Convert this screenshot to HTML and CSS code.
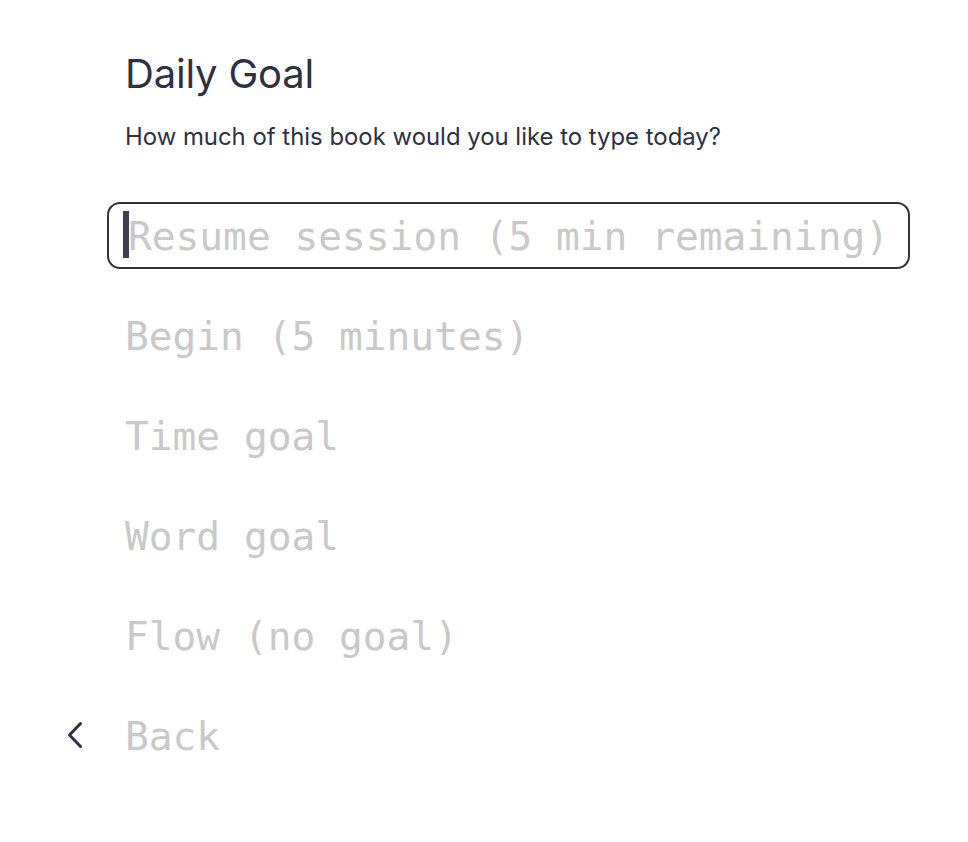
FILE: index.html
```html
<!DOCTYPE html>
<html lang="en">
<head>
<meta charset="utf-8">
<title>Daily Goal</title>
<link rel="stylesheet" href="styles.css">
</head>
<body>
<main class="page">
  <h1 class="title">Daily Goal</h1>
  <p class="subtitle">How much of this book would you like to type today?</p>
  <ul class="options">
    <li class="option active"><span class="cursor"></span>Resume session (5 min remaining)</li>
    <li class="option">Begin (5 minutes)</li>
    <li class="option">Time goal</li>
    <li class="option">Word goal</li>
    <li class="option">Flow (no goal)</li>
    <li class="option back">
      <svg class="chevron" width="20" height="30" viewBox="0 0 20 30" aria-hidden="true"><path d="M15.5 3.5 L4.5 15 L15.5 26.5" fill="none" stroke="#2d3142" stroke-width="3" stroke-linecap="round" stroke-linejoin="round"/></svg>
      Back
    </li>
  </ul>
</main>
</body>
</html>
```
FILE: styles.css
```css
html, body {
  margin: 0;
  padding: 0;
  background: #ffffff;
}
.page {
  padding: 48px 0 0 125px;
  font-family: Inter, "Noto Sans", sans-serif;
  color: #2d3142;
}
.title {
  margin: 0;
  font-size: 40px;
  line-height: 52px;
  font-weight: 400;
  letter-spacing: -0.2px;
}
.subtitle {
  margin: 21px 0 0;
  font-size: 23.9px;
  line-height: 32px;
  font-weight: 400;
}
.options {
  list-style: none;
  margin: 49px 0 0 -18px;
  padding: 0;
}
.option {
  position: relative;
  box-sizing: border-box;
  width: 803px;
  height: 67px;
  margin-bottom: 33px;
  padding: 0 16px 0 16px;
  border: 2px solid transparent;
  border-radius: 13px;
  display: flex;
  align-items: center;
  font-family: "DejaVu Sans Mono", "Liberation Mono", monospace;
  font-size: 39.5px;
  color: #c9c9c9;
  white-space: nowrap;
}
.option.active {
  border-color: #2d3142;
  padding-left: 19px;
}
.cursor {
  position: absolute;
  left: 14px;
  top: 7px;
  width: 6px;
  height: 47px;
  background: #3d4052;
}
.chevron {
  position: absolute;
  left: -44px;
  top: 16px;
}
```
